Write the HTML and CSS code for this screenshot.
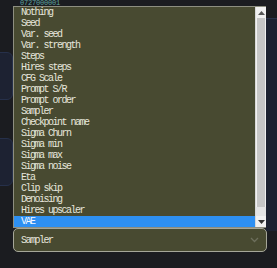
FILE: index.html
```html
<!DOCTYPE html>
<html lang="en">
<head>
  <meta charset="UTF-8">
  <title>Infotext dropdown</title>
  <link rel="stylesheet" href="styles.css">
</head>
<body>
  <div class="page">
    <div class="side-left">
      <div class="ghost-box"></div>
      <div class="ghost-box"></div>
    </div>

    <div class="main">
      <div class="seed-peek">0727000001</div>

      <div class="listbox">
        <ul class="options">
          <li>Nothing</li>
          <li>Seed</li>
          <li>Var. seed</li>
          <li>Var. strength</li>
          <li>Steps</li>
          <li>Hires steps</li>
          <li>CFG Scale</li>
          <li>Prompt S/R</li>
          <li>Prompt order</li>
          <li>Sampler</li>
          <li>Checkpoint name</li>
          <li>Sigma Churn</li>
          <li>Sigma min</li>
          <li>Sigma max</li>
          <li>Sigma noise</li>
          <li>Eta</li>
          <li>Clip skip</li>
          <li>Denoising</li>
          <li>Hires upscaler</li>
          <li class="selected">VAE</li>
        </ul>
        <div class="scrollbar">
          <div class="arrow">
            <svg width="7" height="4" viewBox="0 0 7 4"><path d="M0 4 L3.5 0 L7 4 Z" fill="#555"/></svg>
          </div>
          <div class="thumb"></div>
          <div class="track"></div>
          <div class="arrow">
            <svg width="7" height="4" viewBox="0 0 7 4"><path d="M0 0 L3.5 4 L7 0 Z" fill="#333"/></svg>
          </div>
        </div>
      </div>

      <div class="select">
        <span>Sampler</span>
        <svg width="9" height="6" viewBox="0 0 9 6"><path d="M1 1 L4.5 4.5 L8 1" fill="none" stroke="#6d6f5c" stroke-width="1.3"/></svg>
      </div>
    </div>

    <div class="side-right"></div>
  </div>
</body>
</html>
```

FILE: styles.css
```css
body {
  margin: 0;
  background-color: #1b1c20;
  font-family: 'Liberation Mono', monospace;
  color: #e6e6dc;
  overflow: hidden;
}

.page {
  display: grid;
  grid-template-columns: 13px 253px 11px;
  height: 268px;
}

.side-left {
  display: flex;
  flex-direction: column;
  gap: 38px;
  padding-top: 52px;
}

.ghost-box {
  height: 46px;
  margin-left: -10px;
  border: 1px solid #26304a;
  border-radius: 6px;
  background-color: #1d2232;
}

.side-right {
  margin-top: 18px;
  height: 212px;
  background-color: #1d2231;
  border-top: 1px solid #283148;
}

.main {
  display: flex;
  flex-direction: column;
}

.seed-peek {
  height: 6px;
  padding-left: 7px;
  font-size: 7px;
  line-height: 6px;
  color: #5fa3a0;
  letter-spacing: -0.2px;
}

.listbox {
  display: flex;
  background-color: #484a31;
  border: 1px solid #8d8e80;
  border-right: none;
}

.options {
  flex: 1;
  list-style: none;
  margin: 0;
  padding: 0;
}

.options li {
  height: 11px;
  line-height: 11px;
  padding-left: 7px;
  font-size: 10px;
  letter-spacing: -1.5px;
  white-space: nowrap;
}

.options li.selected {
  background-color: #2e90f2;
  color: #f4f8ff;
}

.scrollbar {
  width: 10px;
  display: flex;
  flex-direction: column;
  background-color: #f0f0f0;
  border-left: 1px solid #d8d8d8;
}

.arrow {
  height: 11px;
  display: flex;
  align-items: center;
  justify-content: center;
}

.thumb {
  flex: 1;
  margin: 0 1px;
  background-color: #c6c6c6;
}

.track {
  height: 9px;
  background-color: #e4e4e4;
}

.select {
  display: flex;
  align-items: center;
  justify-content: space-between;
  height: 22px;
  margin-right: -1px;
  padding: 0 7px;
  border: 1px solid #a5a698;
  border-radius: 5px;
  background-color: #484a31;
  font-size: 10px;
  letter-spacing: -1.5px;
}
```
